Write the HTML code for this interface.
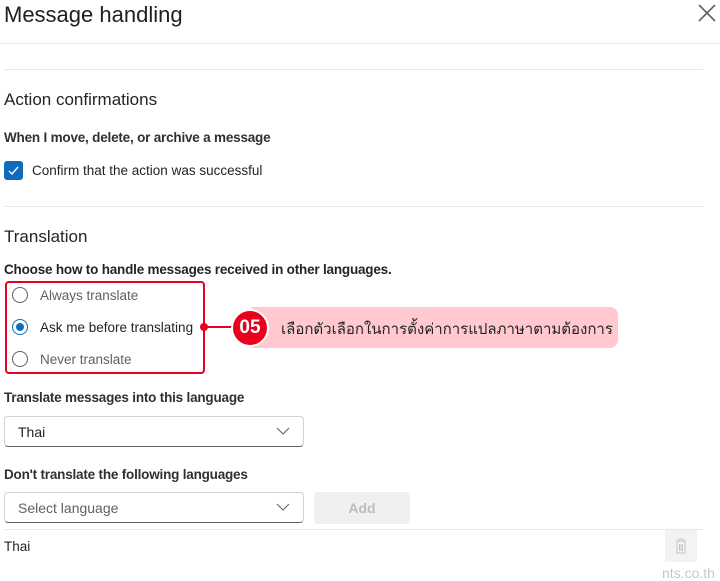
<!DOCTYPE html>
<html><head><meta charset="utf-8"><style>
*{margin:0;padding:0;box-sizing:border-box}
body{width:720px;height:580px;overflow:hidden;background:#fff;font-family:"Liberation Sans","Noto Sans CJK SC",sans-serif;color:#242424;position:relative}
.a{position:absolute;white-space:nowrap}
.hl{position:absolute;height:1px;background:#e6e6e6}
.lbl{font-size:13.5px;font-weight:bold;color:#303030;letter-spacing:-0.2px}
.rad{position:absolute;left:12px;width:16px;height:16px;border:1px solid #616161;border-radius:50%}
.dd{position:absolute;left:4px;width:300px;height:31px;border:1px solid #d1d1d1;border-bottom:1px solid #616161;border-radius:4px;font-size:14px;padding:7px 0 0 13px}
.dd svg{position:absolute;right:13px;top:10px}
</style></head><body>
<div class="a" style="left:4px;top:2px;font-size:22px;color:#202020">Message handling</div>
<svg class="a" style="left:698px;top:4px" width="18" height="18" viewBox="0 0 18 18"><path d="M1 1L17 17M17 1L1 17" stroke="#616161" stroke-width="1.6"/></svg>
<div class="hl" style="left:0;top:43px;width:720px"></div>
<div class="hl" style="left:4px;top:69px;width:699px"></div>
<div class="a" style="left:4px;top:90px;font-size:17px">Action confirmations</div>
<div class="a lbl" style="left:4px;top:130px">When I move, delete, or archive a message</div>
<div class="a" style="left:4px;top:161px;width:19px;height:19px;background:#0f6cbd;border-radius:3px"><svg width="19" height="19" viewBox="0 0 19 19"><path d="M5 10l3 3 6-7" stroke="#fff" stroke-width="1.4" fill="none"/></svg></div>
<div class="a" style="left:32px;top:163px;font-size:13.5px">Confirm that the action was successful</div>
<div class="hl" style="left:4px;top:206px;width:699px"></div>
<div class="a" style="left:4px;top:227px;font-size:17px">Translation</div>
<div class="a lbl" style="left:4px;top:262px;color:#242424">Choose how to handle messages received in other languages.</div>
<div class="a" style="left:5px;top:281px;width:200px;height:93px;border:2px solid #e8001c;border-radius:4px"></div>
<div class="rad" style="top:287px"></div>
<div class="rad" style="top:319px;border-color:#0f6cbd"><div style="position:absolute;left:3px;top:3px;width:8px;height:8px;border-radius:50%;background:#0f6cbd"></div></div>
<div class="rad" style="top:351px"></div>
<div class="a" style="left:40px;top:288px;font-size:13.5px;color:#616161">Always translate</div>
<div class="a" style="left:40px;top:320px;font-size:13.5px">Ask me before translating</div>
<div class="a" style="left:40px;top:352px;font-size:13.5px;color:#616161">Never translate</div>
<div class="a" style="left:204px;top:326px;width:30px;height:2px;background:#e8001c"></div>
<div class="a" style="left:200px;top:323px;width:8px;height:8px;border-radius:50%;background:#e8001c"></div>
<div class="a" style="left:252px;top:307px;width:366px;height:41px;background:#ffc9cf;border-radius:0 8px 8px 0"></div>
<div class="a" style="left:231px;top:309px;width:38px;height:38px;border-radius:50%;background:#e8001c;border:2px solid #fff;color:#fff;font-size:19px;font-weight:bold;text-align:center;line-height:34px">05</div>
<div class="a" style="left:281px;top:317px;font-size:15px;font-family:'Liberation Sans','Noto Sans CJK SC','WenQuanYi Zen Hei',sans-serif">เลือกตัวเลือกในการตั้งค่าการแปลภาษาตามต้องการ</div>
<div class="a lbl" style="left:4px;top:390px">Translate messages into this language</div>
<div class="dd" style="top:416px">Thai<svg width="14" height="8" viewBox="0 0 14 8"><path d="M1 1l6 6 6-6" stroke="#616161" fill="none"/></svg></div>
<div class="a lbl" style="left:4px;top:467px">Don't translate the following languages</div>
<div class="dd" style="top:492px;color:#616161">Select language<svg width="14" height="8" viewBox="0 0 14 8"><path d="M1 1l6 6 6-6" stroke="#616161" fill="none"/></svg></div>
<div class="a" style="left:314px;top:492px;width:96px;height:32px;background:#f0f0f0;border-radius:4px;color:#bdbdbd;font-size:14px;font-weight:bold;text-align:center;line-height:32px">Add</div>
<div class="hl" style="left:4px;top:529px;width:699px"></div>
<div class="a" style="left:4px;top:539px;font-size:13.5px">Thai</div>
<div class="a" style="left:665px;top:530px;width:32px;height:32px;background:#f3f3f3"><svg width="32" height="32" viewBox="0 0 32 32"><path d="M11 11h10M14 11v-2h4v2M12 11v12h8v-12M14.5 14v7M16 14v7M17.5 14v7" stroke="#c4c4c4" fill="none"/></svg></div>
<div class="a" style="left:662px;top:565px;font-size:14px;color:#c8c8c8">nts.co.th</div>
</body></html>
